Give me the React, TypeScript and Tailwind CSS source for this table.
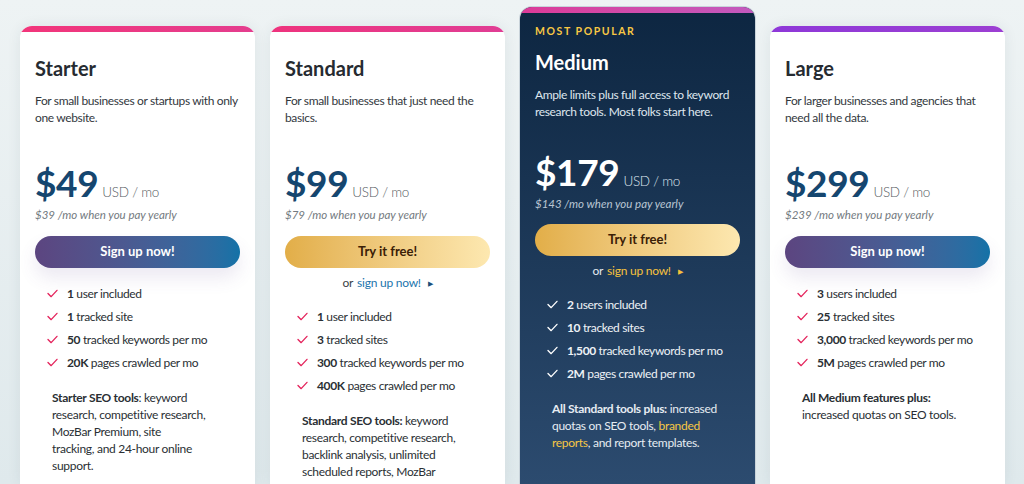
type Feature = { bold: string; rest: string };

type Plan = {
  name: string;
  desc: string;
  price: string;
  yearly: string;
  cta: "signup" | "trial";
  features: Feature[];
  band: string;
  dark?: boolean;
  note: React.ReactNode;
};

const plans: Plan[] = [
  {
    name: "Starter",
    desc: "For small businesses or startups with only one website.",
    price: "$49",
    yearly: "$39 /mo when you pay yearly",
    cta: "signup",
    band: "bg-gradient-to-r from-[#f2357a] to-[#e43d8e]",
    features: [
      { bold: "1", rest: "user included" },
      { bold: "1", rest: "tracked site" },
      { bold: "50", rest: "tracked keywords per mo" },
      { bold: "20K", rest: "pages crawled per mo" },
    ],
    note: (
      <>
        <b className="font-bold">Starter SEO tools</b>: keyword research, competitive research, MozBar Premium, site
        <br />
        tracking, and 24-hour online support.
      </>
    ),
  },
  {
    name: "Standard",
    desc: "For small businesses that just need the basics.",
    price: "$99",
    yearly: "$79 /mo when you pay yearly",
    cta: "trial",
    band: "bg-gradient-to-r from-[#ee337d] to-[#e03d94]",
    features: [
      { bold: "1", rest: "user included" },
      { bold: "3", rest: "tracked sites" },
      { bold: "300", rest: "tracked keywords per mo" },
      { bold: "400K", rest: "pages crawled per mo" },
    ],
    note: (
      <>
        <b className="font-bold">Standard SEO tools:</b> keyword research, competitive research, backlink analysis,
        unlimited scheduled reports, MozBar Premium, and more.
      </>
    ),
  },
  {
    name: "Medium",
    desc: "Ample limits plus full access to keyword research tools. Most folks start here.",
    price: "$179",
    yearly: "$143 /mo when you pay yearly",
    cta: "trial",
    dark: true,
    band: "bg-gradient-to-r from-[#dc3a98] to-[#c259be]",
    features: [
      { bold: "2", rest: "users included" },
      { bold: "10", rest: "tracked sites" },
      { bold: "1,500", rest: "tracked keywords per mo" },
      { bold: "2M", rest: "pages crawled per mo" },
    ],
    note: (
      <>
        <b className="font-bold">All Standard tools plus:</b> increased quotas on SEO tools,{" "}
        <span className="text-[#f7c744]">branded reports</span>, and report templates.
      </>
    ),
  },
  {
    name: "Large",
    desc: "For larger businesses and agencies that need all the data.",
    price: "$299",
    yearly: "$239 /mo when you pay yearly",
    cta: "signup",
    band: "bg-gradient-to-r from-[#8e38d8] to-[#9c3fd2]",
    features: [
      { bold: "3", rest: "users included" },
      { bold: "25", rest: "tracked sites" },
      { bold: "3,000", rest: "tracked keywords per mo" },
      { bold: "5M", rest: "pages crawled per mo" },
    ],
    note: (
      <>
        <b className="font-bold">All Medium features plus:</b> increased quotas on SEO tools.
      </>
    ),
  },
];

function Check({ dark }: { dark?: boolean }) {
  return (
    <svg viewBox="0 0 12 10" className="h-[9px] w-[11px] shrink-0" fill="none">
      <polyline
        points="1,5 4.5,8.5 11,1.5"
        stroke={dark ? "#ffffff" : "#e4245c"}
        strokeWidth="1.5"
        strokeLinecap="round"
        strokeLinejoin="round"
      />
    </svg>
  );
}

function PlanCard({ plan }: { plan: Plan }) {
  const dark = plan.dark;
  return (
    <div
      className={`relative w-[235px] shrink-0 overflow-hidden rounded-t-[12px] ${
        dark
          ? "mt-[7px] h-[477px] bg-gradient-to-b from-[#0d2641] to-[#2c4b6f] shadow-[0_0_0_1px_#c9d3da]"
          : "mt-[26px] h-[458px] bg-white shadow-[0_0_14px_rgba(40,60,80,0.08)]"
      }`}
    >
      <div className={`h-[6px] ${plan.band}`} />
      <div className={`px-[15px] ${dark ? "pt-[10px]" : "pt-[22px]"}`}>
        {dark && (
          <div className="text-[10.5px] leading-[16px] font-bold tracking-[0.15em] text-[#f7c744]">MOST POPULAR</div>
        )}
        <h2
          className={`text-[20px] leading-[28px] font-bold ${dark ? "mt-[9px] text-white" : "text-[#262b31]"}`}
        >
          {plan.name}
        </h2>
        <p
          className={`mt-[10px] text-[12px] leading-[17px] tracking-[-0.03em] ${
            dark ? "text-[#dfe6ee]" : "text-[#33383e]"
          }`}
        >
          {plan.desc}
        </p>

        <div className={`flex items-baseline gap-[4px] ${dark ? "mt-[32px]" : "mt-[37px]"}`}>
          <span
            className={`text-[37px] leading-[40px] font-bold tracking-[-0.01em] ${
              dark ? "text-white" : "text-[#15466f]"
            }`}
          >
            {plan.price}
          </span>
          <span
            className={`text-[13.5px] font-light tracking-[-0.02em] ${dark ? "text-[#dfe6ee]" : "text-[#555b61]"}`}
          >
            USD / mo
          </span>
        </div>
        <div className={`mt-[4px] text-[11.5px] leading-[16px] italic ${dark ? "text-[#b9c6d3]" : "text-[#737a80]"}`}>
          {plan.yearly}
        </div>

        {plan.cta === "signup" ? (
          <button className="mt-[13px] flex h-[32px] w-full items-center justify-center rounded-full bg-gradient-to-r from-[#5c4580] to-[#1372a7] text-[13px] font-bold text-white shadow-[0_10px_18px_rgba(100,70,150,0.12)]">
            Sign up now!
          </button>
        ) : (
          <>
            <button
              className={`${dark ? "mt-[12px]" : "mt-[13px]"} flex h-[32px] w-full items-center justify-center rounded-full bg-gradient-to-r from-[#e2ae48] to-[#fde8b0] text-[13px] font-bold text-[#3b2006]`}
            >
              Try it free!
            </button>
            <div
              className={`mt-[5px] flex h-[20px] items-center justify-center gap-[4px] text-[12px] tracking-[-0.02em] ${
                dark ? "text-[#e3e9ef]" : "text-[#3a3f45]"
              }`}
            >
              <span>or</span>
              <span className={dark ? "text-[#f7c23c]" : "text-[#1b74ad]"}>sign up now!</span>
              <span className={`ml-[3px] text-[7px] ${dark ? "text-[#f7c23c]" : "text-[#1b4f7a]"}`}>▶</span>
            </div>
          </>
        )}

        <ul className={`${plan.cta === "trial" ? "mt-[12px]" : "mt-[14px]"} ml-[12px]`}>
          {plan.features.map((f) => (
            <li
              key={f.rest}
              className={`flex h-[23px] items-center gap-[9px] text-[12px] tracking-[-0.03em] ${
                dark ? "text-[#eef2f6]" : "text-[#2a2f34]"
              }`}
            >
              <Check dark={dark} />
              <span>
                <b className="font-bold">{f.bold}</b> {f.rest}
              </span>
            </li>
          ))}
        </ul>

        <p
          className={`mt-[15px] ml-[17px] w-[172px] text-[12px] leading-[17px] tracking-[-0.025em] ${
            dark ? "text-[#e6ecf2]" : "text-[#2a2f34]"
          }`}
        >
          {plan.note}
        </p>
      </div>
    </div>
  );
}

export default function App() {
  return (
    <div
      className="flex h-[484px] w-[1024px] items-start gap-[15px] overflow-hidden bg-gradient-to-b from-[#eef3f4] to-[#dfe9ec] px-[20px]"
      style={{ fontFamily: "Lato, 'Open Sans', sans-serif" }}
    >
      {plans.map((p) => (
        <PlanCard key={p.name} plan={p} />
      ))}
    </div>
  );
}
